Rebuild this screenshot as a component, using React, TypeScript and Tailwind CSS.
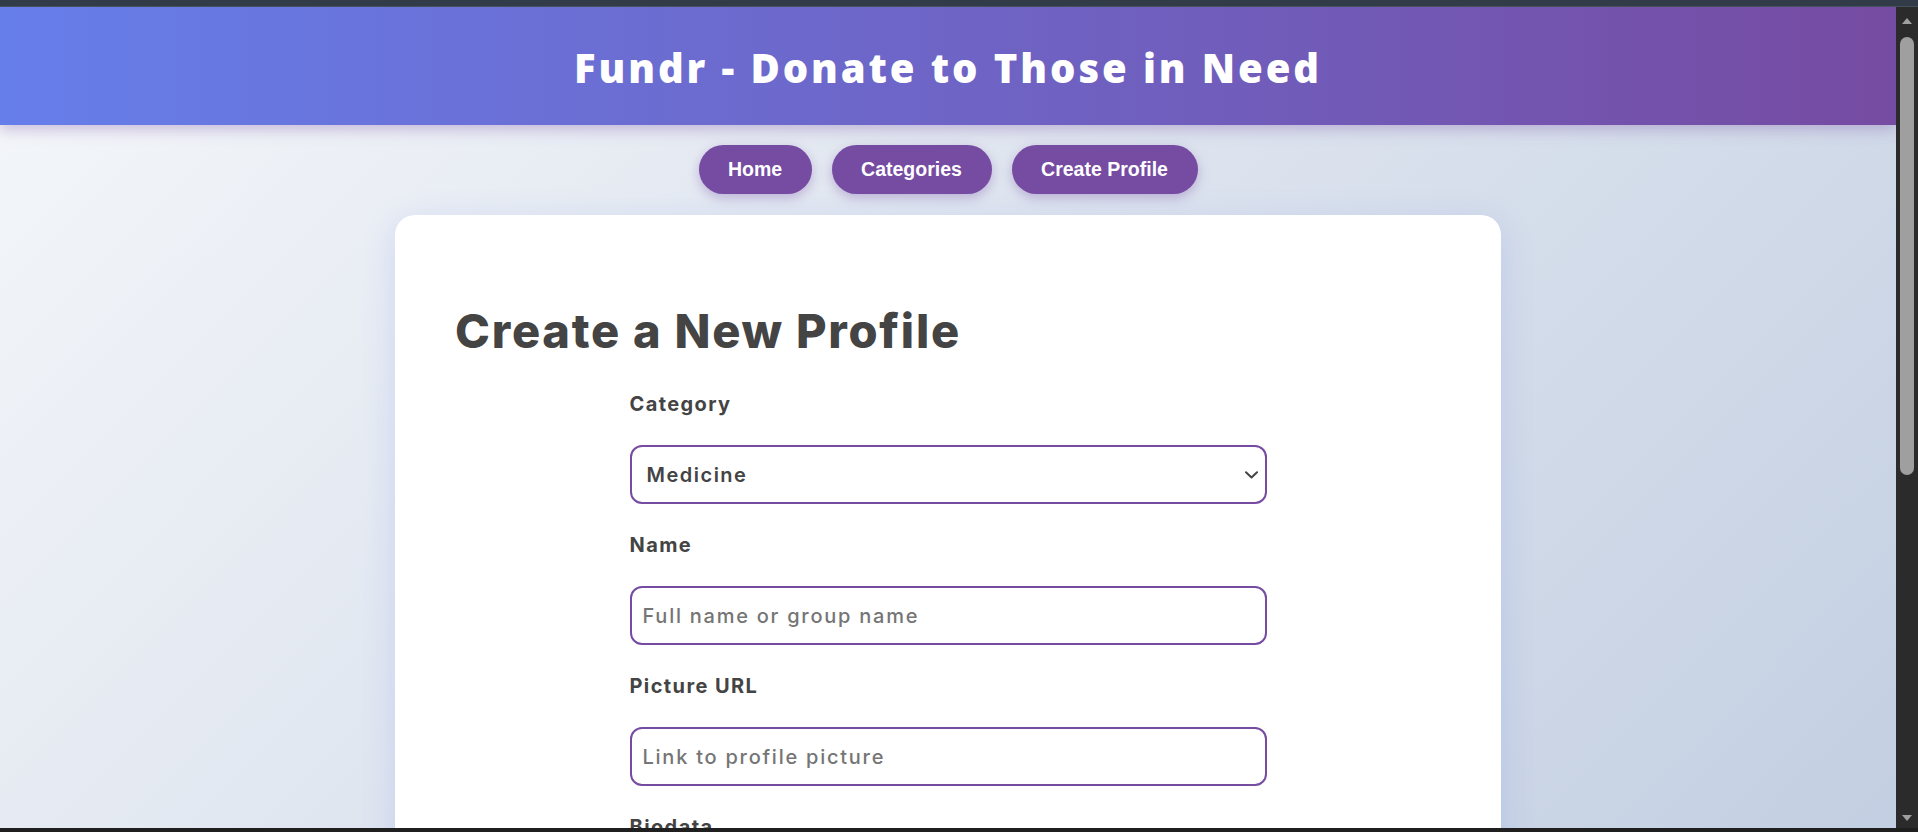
import { useState } from 'react';

const fields = [
    { label: 'Name', placeholder: 'Full name or group name' },
    { label: 'Picture URL', placeholder: 'Link to profile picture' },
];

function Chevron() {
    return (
        <svg className="pointer-events-none absolute right-[9px] top-1/2 -translate-y-1/2" width="13" height="8" viewBox="0 0 13 8" fill="none">
            <path d="M1 1.2L6.5 6.5L12 1.2" stroke="#444" strokeWidth="2" strokeLinecap="round" strokeLinejoin="round" />
        </svg>
    );
}

export default function App() {
    const [category, setCategory] = useState('Medicine');

    return (
        <div className="flex h-[832px] w-full flex-col overflow-hidden bg-[#1f1f1f]">
            <div className="h-[7px] shrink-0 border-b border-[#47505d] bg-[#323b48]" />
            <div className="flex min-h-0 flex-1">
                <div className="relative flex-1 overflow-hidden bg-[linear-gradient(135deg,#f5f7fa_0%,#c3cfe2_100%)]">
                    <header className="relative z-10 flex h-[118px] items-center justify-center bg-[linear-gradient(90deg,#667eea_0%,#764ba2_100%)] shadow-[0_4px_14px_rgba(118,75,162,0.35)]">
                        <h1 className="pt-[3px] text-[40px] font-extrabold tracking-[2.9px] text-white [font-family:'Open_Sans',sans-serif]">
                            Fundr - Donate to Those in Need
                        </h1>
                    </header>

                    <nav className="mt-[20px] flex justify-center gap-[20px] [font-family:'Liberation_Sans',Arial,sans-serif]">
                        <button className="h-[49px] w-[113px] rounded-full bg-[#764ba2] text-[19.5px] font-bold text-white shadow-[0_4px_12px_rgba(118,75,162,0.35)]">Home</button>
                        <button className="h-[49px] w-[160px] rounded-full bg-[#764ba2] text-[19.5px] font-bold text-white shadow-[0_4px_12px_rgba(118,75,162,0.35)]">Categories</button>
                        <button className="h-[49px] w-[186px] rounded-full bg-[#764ba2] text-[19.5px] font-bold text-white shadow-[0_4px_12px_rgba(118,75,162,0.35)]">Create Profile</button>
                    </nav>

                    <main className="mx-auto mt-[21px] w-[1106px] rounded-[20px] bg-white px-[60px] pt-[92px] pb-[60px] shadow-[0_8px_34px_rgba(102,126,234,0.2)] [font-family:Inter,sans-serif]">
                        <h2 className="mb-[41px] text-[47px] leading-[47px] font-extrabold tracking-[1.75px] text-[#444]">Create a New Profile</h2>

                        <form className="mx-auto w-[637px]" onSubmit={e => e.preventDefault()}>
                            <label className="mb-[31px] block text-[20px] leading-[19px] font-bold tracking-[1.4px] text-[#444]">Category</label>
                            <div className="relative mb-[32px]">
                                <select
                                    value={category}
                                    onChange={e => setCategory(e.target.value)}
                                    className="h-[59px] w-full appearance-none rounded-[12px] border-2 border-[#764ba2] bg-white pl-[15px] text-[20px] font-semibold tracking-[1.5px] text-[#444] outline-none"
                                >
                                    <option>Medicine</option>
                                    <option>Education</option>
                                    <option>Disaster Relief</option>
                                    <option>Community</option>
                                </select>
                                <Chevron />
                            </div>

                            {fields.map(f => (
                                <div key={f.label}>
                                    <label className="mb-[31px] block text-[20px] leading-[19px] font-bold tracking-[1.4px] text-[#444]">{f.label}</label>
                                    <input
                                        type="text"
                                        placeholder={f.placeholder}
                                        className="mb-[32px] block h-[59px] w-full rounded-[12px] border-2 border-[#764ba2] bg-white px-[11px] text-[20px] font-medium tracking-[1.75px] text-[#444] outline-none placeholder:text-[#757575]"
                                    />
                                </div>
                            ))}

                            <label className="mb-[31px] block text-[20px] leading-[19px] font-bold tracking-[1.4px] text-[#444]">Biodata</label>
                            <textarea className="block h-[140px] w-full rounded-[12px] border-2 border-[#764ba2] px-[11px] py-[10px]" />
                        </form>
                    </main>
                </div>

                {/* scrollbar */}
                <div className="flex w-[22px] shrink-0 flex-col items-center bg-[#2b2b2b] pt-[10px] pb-[6px]">
                    <svg width="12" height="8" viewBox="0 0 12 8"><path d="M6 1L11 7H1Z" fill="#9f9f9f" /></svg>
                    <div className="mt-[12px] h-[438px] w-[14px] rounded-full bg-[#9f9f9f]" />
                    <div className="flex-1" />
                    <svg width="12" height="8" viewBox="0 0 12 8"><path d="M1 1H11L6 7Z" fill="#9f9f9f" /></svg>
                </div>
            </div>
            <div className="h-[4px] shrink-0 bg-[#1f1f1f]" />
        </div>
    );
}
